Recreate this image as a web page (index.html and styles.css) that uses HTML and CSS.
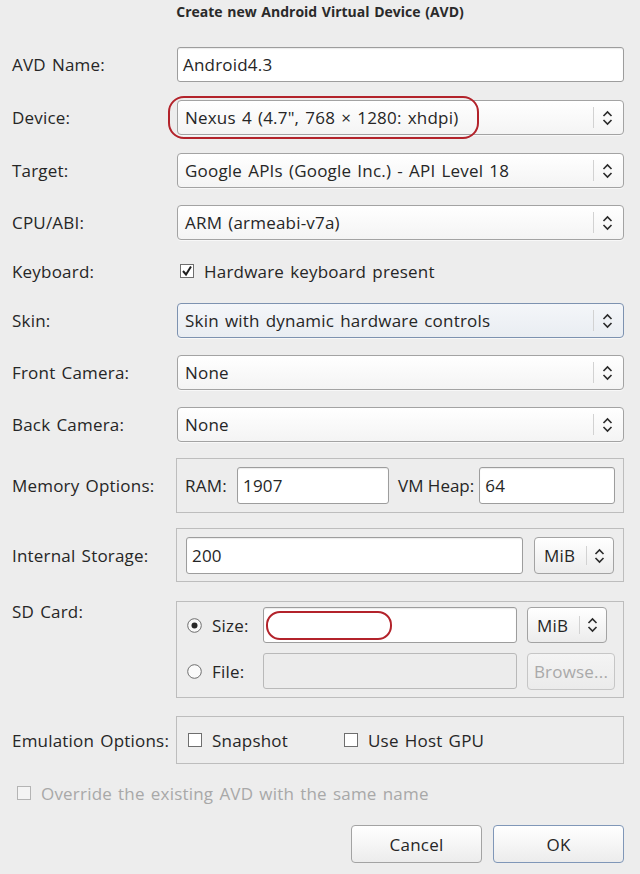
FILE: index.html
```html
<!DOCTYPE html>
<html>
<head>
<meta charset="utf-8">
<title>Create new Android Virtual Device (AVD)</title>
<link rel="stylesheet" href="styles.css">
</head>
<body>
<div class="dialog">
  <div class="title">Create new Android Virtual Device (AVD)</div>

  <div class="row r-name">
    <div class="lbl">AVD Name:</div>
    <div class="input grow">Android4.3</div>
  </div>

  <div class="row r-device">
    <div class="lbl">Device:</div>
    <div class="select grow">
      <span class="sel-text">Nexus 4 (4.7", 768 × 1280: xhdpi)</span>
      <span class="sel-sep"></span>
      <svg class="arrows" width="11" height="16" viewBox="0 0 11 16"><path d="M1.5 6 L5.5 2 L9.5 6 M1.5 10 L5.5 14 L9.5 10" fill="none" stroke="#2a2a2a" stroke-width="1.6"/></svg>
      <span class="mark mark-device"></span>
    </div>
  </div>

  <div class="row r-target">
    <div class="lbl">Target:</div>
    <div class="select grow">
      <span class="sel-text">Google APIs (Google Inc.) - API Level 18</span>
      <span class="sel-sep"></span>
      <svg class="arrows" width="11" height="16" viewBox="0 0 11 16"><path d="M1.5 6 L5.5 2 L9.5 6 M1.5 10 L5.5 14 L9.5 10" fill="none" stroke="#2a2a2a" stroke-width="1.6"/></svg>
    </div>
  </div>

  <div class="row r-cpu">
    <div class="lbl">CPU/ABI:</div>
    <div class="select grow">
      <span class="sel-text">ARM (armeabi-v7a)</span>
      <span class="sel-sep"></span>
      <svg class="arrows" width="11" height="16" viewBox="0 0 11 16"><path d="M1.5 6 L5.5 2 L9.5 6 M1.5 10 L5.5 14 L9.5 10" fill="none" stroke="#2a2a2a" stroke-width="1.6"/></svg>
    </div>
  </div>

  <div class="row r-kbd">
    <div class="lbl">Keyboard:</div>
    <div class="check kbd-check">
      <svg class="box" width="14" height="14" viewBox="0 0 14 14"><rect x="0.5" y="0.5" width="13" height="13" fill="#fff" stroke="#6e6e6e"/><path d="M3 7 L6 10.5 L11 2.5" fill="none" stroke="#1e1e1e" stroke-width="2"/></svg>
      <span>Hardware keyboard present</span>
    </div>
  </div>

  <div class="row r-skin">
    <div class="lbl">Skin:</div>
    <div class="select focus grow">
      <span class="sel-text">Skin with dynamic hardware controls</span>
      <span class="sel-sep"></span>
      <svg class="arrows" width="11" height="16" viewBox="0 0 11 16"><path d="M1.5 6 L5.5 2 L9.5 6 M1.5 10 L5.5 14 L9.5 10" fill="none" stroke="#2a2a2a" stroke-width="1.6"/></svg>
    </div>
  </div>

  <div class="row r-front">
    <div class="lbl">Front Camera:</div>
    <div class="select grow">
      <span class="sel-text">None</span>
      <span class="sel-sep"></span>
      <svg class="arrows" width="11" height="16" viewBox="0 0 11 16"><path d="M1.5 6 L5.5 2 L9.5 6 M1.5 10 L5.5 14 L9.5 10" fill="none" stroke="#2a2a2a" stroke-width="1.6"/></svg>
    </div>
  </div>

  <div class="row r-back">
    <div class="lbl">Back Camera:</div>
    <div class="select grow">
      <span class="sel-text">None</span>
      <span class="sel-sep"></span>
      <svg class="arrows" width="11" height="16" viewBox="0 0 11 16"><path d="M1.5 6 L5.5 2 L9.5 6 M1.5 10 L5.5 14 L9.5 10" fill="none" stroke="#2a2a2a" stroke-width="1.6"/></svg>
    </div>
  </div>

  <div class="row r-mem">
    <div class="lbl">Memory Options:</div>
    <div class="group grow mem-group">
      <span class="ilbl ram-lbl">RAM:</span>
      <div class="input ram">1907</div>
      <span class="ilbl heap-lbl">VM Heap:</span>
      <div class="input grow">64</div>
    </div>
  </div>

  <div class="row r-int">
    <div class="lbl">Internal Storage:</div>
    <div class="group grow int-group">
      <div class="input grow">200</div>
      <div class="unit">
        <span class="unit-text">MiB</span>
        <span class="sel-sep"></span>
        <svg class="arrows" width="11" height="16" viewBox="0 0 11 16"><path d="M1.5 6 L5.5 2 L9.5 6 M1.5 10 L5.5 14 L9.5 10" fill="none" stroke="#2a2a2a" stroke-width="1.6"/></svg>
      </div>
    </div>
  </div>

  <div class="row r-sd">
    <div class="lbl sd-lbl">SD Card:</div>
    <div class="group grow sd-group">
      <div class="sd-row">
        <div class="radio-wrap">
          <svg width="15" height="15" viewBox="0 0 15 15"><circle cx="7.5" cy="7.5" r="6.8" fill="#fafafa" stroke="#6e6e6e"/><circle cx="7.5" cy="7.5" r="3" fill="#2a2a2a"/></svg>
          <span>Size:</span>
        </div>
        <div class="input sd-input"><span class="mark mark-size"></span></div>
        <div class="unit sd-unit">
          <span class="unit-text">MiB</span>
          <span class="sel-sep"></span>
          <svg class="arrows" width="11" height="16" viewBox="0 0 11 16"><path d="M1.5 6 L5.5 2 L9.5 6 M1.5 10 L5.5 14 L9.5 10" fill="none" stroke="#2a2a2a" stroke-width="1.6"/></svg>
        </div>
      </div>
      <div class="sd-row file-row">
        <div class="radio-wrap">
          <svg width="15" height="15" viewBox="0 0 15 15"><circle cx="7.5" cy="7.5" r="6.8" fill="#fafafa" stroke="#6e6e6e"/></svg>
          <span>File:</span>
        </div>
        <div class="input sd-input disabled"></div>
        <div class="btn browse">Browse...</div>
      </div>
    </div>
  </div>

  <div class="row r-emu">
    <div class="lbl">Emulation Options:</div>
    <div class="group grow emu-group">
      <div class="check snap">
        <svg class="box" width="14" height="14" viewBox="0 0 14 14"><rect x="0.5" y="0.5" width="13" height="13" fill="#fff" stroke="#6e6e6e"/></svg>
        <span>Snapshot</span>
      </div>
      <div class="check">
        <svg class="box" width="14" height="14" viewBox="0 0 14 14"><rect x="0.5" y="0.5" width="13" height="13" fill="#fff" stroke="#6e6e6e"/></svg>
        <span>Use Host GPU</span>
      </div>
    </div>
  </div>

  <div class="row r-override">
    <div class="check override">
      <svg class="box" width="14" height="14" viewBox="0 0 14 14"><rect x="0.5" y="0.5" width="13" height="13" fill="#f4f4f4" stroke="#b4b4b4"/></svg>
      <span>Override the existing AVD with the same name</span>
    </div>
  </div>

  <div class="row r-buttons">
    <div class="btn action">Cancel</div>
    <div class="btn action default">OK</div>
  </div>
</div>
</body>
</html>
```

FILE: styles.css
```css
* { box-sizing: border-box; }

html, body {
  margin: 0;
  padding: 0;
  background: #ededed;
}

body {
  font-family: "Open Sans", "Noto Sans", sans-serif;
  font-size: 17px;
  letter-spacing: 0.2px;
  word-spacing: 1.5px;
  color: #262626;
}

.dialog {
  width: 640px;
  height: 874px;
  padding: 0 16px 0 12px;
  display: flex;
  flex-direction: column;
}

.title {
  font-size: 14px;
  font-weight: bold;
  letter-spacing: 0;
  word-spacing: 1px;
  text-align: center;
  line-height: 18px;
  padding-top: 3px;
  margin-left: -12px;
  margin-right: -16px;
  color: #2a2a2a;
}

.row {
  display: flex;
  align-items: center;
}

.lbl {
  width: 165px;
  flex: none;
  white-space: nowrap;
}

.grow { flex: 1; min-width: 0; }

/* vertical rhythm */
.r-name   { margin-top: 26px; height: 35px; }
.r-device { margin-top: 18px; height: 35px; }
.r-target { margin-top: 18px; height: 35px; }
.r-cpu    { margin-top: 17px; height: 35px; }
.r-kbd    { margin-top: 16px; height: 30px; }
.r-skin   { margin-top: 17px; height: 35px; }
.r-front  { margin-top: 17px; height: 35px; }
.r-back   { margin-top: 17px; height: 35px; }
.r-mem    { margin-top: 16px; }
.r-int    { margin-top: 15px; }
.r-sd     { margin-top: 19px; align-items: flex-start; }
.r-emu    { margin-top: 18px; }
.r-override { margin-top: 19px; height: 20px; }
.r-buttons { margin-top: 22px; justify-content: flex-end; gap: 11px; }

/* text input */
.input {
  height: 35px;
  background: #fff;
  border: 1px solid #9d9d9d;
  border-radius: 3px;
  box-shadow: inset 0 1px 1px rgba(0,0,0,0.08);
  padding: 0 5px;
  display: flex;
  align-items: center;
  white-space: nowrap;
  position: relative;
}

.input.disabled {
  background: #ececec;
  border-color: #b9b9b9;
  box-shadow: none;
}

/* combo box */
.select {
  height: 35px;
  border: 1px solid #a3a3a3;
  border-radius: 4px;
  background: linear-gradient(#ffffff, #f4f4f4);
  display: flex;
  align-items: center;
  padding: 0 10px 0 7px;
  position: relative;
  box-shadow: 0 1px 0 rgba(255,255,255,0.6);
}

.select.focus {
  border-color: #7d92b0;
  background: linear-gradient(#f4f6f9, #e9edf2);
}

.sel-text {
  flex: 1;
  white-space: nowrap;
}

.sel-sep {
  width: 1px;
  align-self: stretch;
  margin: 6px 8px 6px 0;
  background: #d2d2d2;
}

.arrows { flex: none; display: block; }

/* annotation marks */
.mark {
  position: absolute;
  border: 2px solid #b3232b;
  border-radius: 16px;
  pointer-events: none;
}

.mark-device {
  left: -10px;
  top: -5px;
  width: 311px;
  height: 43px;
}

.mark-size {
  left: 2px;
  top: 3px;
  width: 126px;
  height: 29px;
  border-radius: 14px;
}

/* checkbox */
.check {
  display: flex;
  align-items: center;
  white-space: nowrap;
}

.check .box { flex: none; display: block; margin-right: 10px; }

.kbd-check { margin-left: 3px; }

/* groups */
.group {
  border: 1px solid #bdbdbd;
  display: flex;
  align-items: center;
}

.mem-group { padding: 8px; margin-left: -1px; }
.mem-group .input { height: 37px; }
.ilbl { white-space: nowrap; flex: none; }
.ram-lbl { width: 52px; }
.ram { width: 152px; flex: none; }
.heap-lbl { margin-left: 9px; margin-right: 5px; word-spacing: 0; letter-spacing: 0; }

.int-group { padding: 8px 9px 7px 9px; margin-left: -1px; gap: 11px; }
.int-group .input { height: 37px; }

.unit {
  flex: none;
  width: 80px;
  height: 37px;
  border: 1px solid #a3a3a3;
  border-radius: 4px;
  background: linear-gradient(#ffffff, #ececec);
  display: flex;
  align-items: center;
  padding: 0 8px 0 9px;
}

.unit-text { flex: 1; }
.unit .sel-sep { margin: 8px 7px 8px 0; }

.sd-lbl { margin-top: 1px; line-height: 20px; }

.sd-group {
  margin-left: -1px;
  padding: 5px 8px 8px 10px;
  flex-direction: column;
  align-items: stretch;
  gap: 10px;
}

.sd-row {
  display: flex;
  align-items: center;
  height: 36px;
}

.radio-wrap {
  width: 76px;
  flex: none;
  display: flex;
  align-items: center;
}

.radio-wrap svg { display: block; margin-right: 10px; }

.sd-input { width: 254px; flex: none; height: 36px; }

.sd-unit { margin-left: 10px; height: 36px; }

.btn {
  border: 1px solid #a3a3a3;
  border-radius: 4px;
  background: linear-gradient(#ffffff, #ececec);
  display: flex;
  align-items: center;
  justify-content: center;
  white-space: nowrap;
}

.browse {
  margin-left: 10px;
  width: 88px;
  height: 37px;
  color: #a9a9a9;
  border-color: #c6c6c6;
  background: linear-gradient(#f4f4f4, #ebebeb);
}

.emu-group {
  margin-left: -1px;
  height: 48px;
  padding-left: 11px;
}

.snap { width: 156px; flex: none; }

.override {
  margin-left: 5px;
  color: #a8a8a8;
}

.action {
  width: 131px;
  height: 38px;
}

.action.default {
  border-color: #8097b8;
}
```
